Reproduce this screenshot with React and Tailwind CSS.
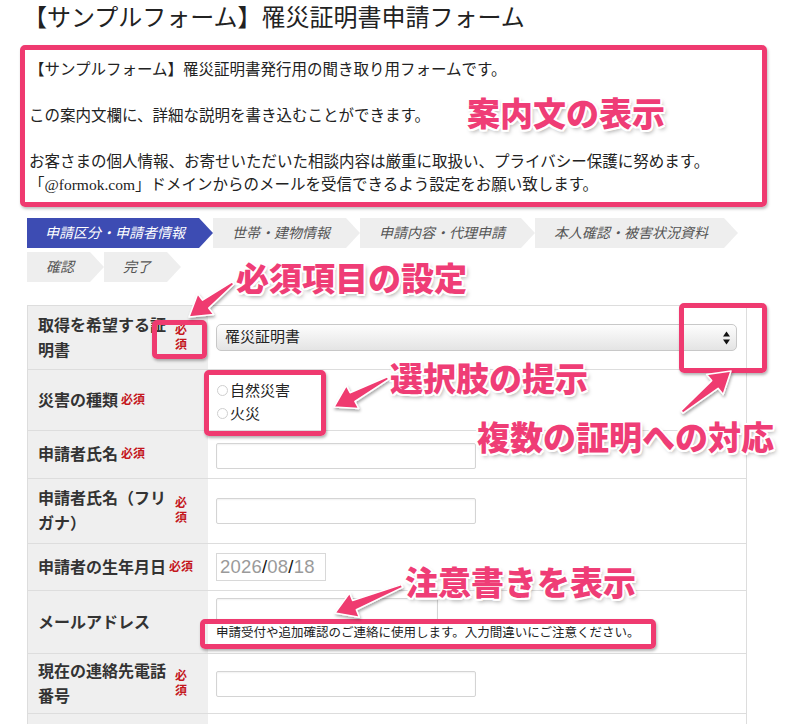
import React from 'react';

const SERIF = "[font-family:'Liberation_Serif','Noto_Sans_CJK_JP',serif]";
const SANS = "[font-family:'Liberation_Sans','Noto_Sans_CJK_JP',sans-serif]";

function arrowPoints(x1, y1, x2, y2, headLen = 21, headW = 26, tailW = 3, shaftW = 10) {
  const dx = x2 - x1, dy = y2 - y1;
  const L = Math.hypot(dx, dy);
  const ux = dx / L, uy = dy / L;
  const px = -uy, py = ux;
  const bx = x2 - ux * headLen, by = y2 - uy * headLen;
  const pts = [
    [x1 + (px * tailW) / 2, y1 + (py * tailW) / 2],
    [bx + (px * shaftW) / 2, by + (py * shaftW) / 2],
    [bx + (px * headW) / 2, by + (py * headW) / 2],
    [x2, y2],
    [bx - (px * headW) / 2, by - (py * headW) / 2],
    [bx - (px * shaftW) / 2, by - (py * shaftW) / 2],
    [x1 - (px * tailW) / 2, y1 - (py * tailW) / 2],
  ];
  return pts.map((p) => p.map((v) => v.toFixed(1)).join(',')).join(' ');
}

function Step({ active, children }) {
  return (
    <div
      className={
        active
          ? 'h-[30px] flex items-center pl-[18px] pr-[28px] text-[14px] italic bg-[#3d4cb3] text-white [clip-path:polygon(0_0,calc(100%_-_14px)_0,100%_50%,calc(100%_-_14px)_100%,0_100%)]'
          : 'h-[30px] flex items-center pl-[19px] pr-[30px] text-[14px] italic bg-[#eeeeee] text-[#555] [clip-path:polygon(0_0,calc(100%_-_14px)_0,100%_50%,calc(100%_-_14px)_100%,0_100%)]'
      }
    >
      {children}
    </div>
  );
}

function Req() {
  return <span className="ml-[3px] text-[12px] font-bold text-[#c4161c]">必須</span>;
}

function ReqV() {
  return (
    <span className="ml-[9px] w-[12px] text-[12px] leading-[15px] font-bold text-[#c4161c]">必須</span>
  );
}

function TextInput({ w = 'w-[260px]' }) {
  return (
    <div className={`${w} h-[26px] bg-white border border-[#d4d4d4] rounded-[2px] shadow-[inset_0_1px_2px_rgba(0,0,0,0.06)]`} />
  );
}

function Box({ className }) {
  return (
    <div
      className={`absolute border-[5px] border-[#ef3a70] rounded-[5px] shadow-[1px_2px_3px_rgba(0,0,0,0.3)] ${className}`}
    />
  );
}

function Note({ className, children }) {
  return (
    <div
      className={`absolute whitespace-nowrap text-[33px] leading-[36px] font-black text-[#ef3d76] [font-family:'Noto_Sans_CJK_JP',sans-serif] [text-shadow:-1.5px_-1.5px_0_#fff,1.5px_-1.5px_0_#fff,-1.5px_1.5px_0_#fff,1.5px_1.5px_0_#fff,0_2px_0_#fff,2px_0_0_#fff,-2px_0_0_#fff,0_-2px_0_#fff,2px_3px_4px_rgba(0,0,0,0.35)] ${className}`}
    >
      {children}
    </div>
  );
}

export default function App() {
  const arrows = [
    [233, 283, 189, 317],
    [388, 378, 334, 407],
    [682, 412, 731, 371],
    [402, 586, 335, 613],
  ];
  return (
    <div className={`relative w-[787px] h-[724px] overflow-hidden bg-white text-[#222] ${SERIF}`}>
      <div className="pl-[27px]">
        <h1 className="text-[24px] leading-[36px] ml-[-4px] text-[#222]">【サンプルフォーム】罹災証明書申請フォーム</h1>

        <div className="mt-[9px] ml-[-7px] w-[747px] h-[162px] border-[5px] border-[#ef3a70] rounded-[5px] shadow-[1px_2px_3px_rgba(0,0,0,0.25)] px-[4px] pt-[8px] text-[15.5px] leading-[23px] text-[#222]">
          <p>【サンプルフォーム】罹災証明書発行用の聞き取り用フォームです。</p>
          <p>&nbsp;</p>
          <p>この案内文欄に、詳細な説明を書き込むことができます。</p>
          <p>&nbsp;</p>
          <p>お客さまの個人情報、お寄せいただいた相談内容は厳重に取扱い、プライバシー保護に努めます。</p>
          <p>「@formok.com」ドメインからのメールを受信できるよう設定をお願い致します。</p>
        </div>

        <div className="mt-[11px] w-[720px] flex flex-wrap gap-y-[4px]">
          <Step active>申請区分・申請者情報</Step>
          <Step>世帯・建物情報</Step>
          <Step>申請内容・代理申請</Step>
          <Step>本人確認・被害状況資料</Step>
          <Step>確認</Step>
          <Step>完了</Step>
        </div>

        <div className="mt-[23px] w-[720px] border-t border-l border-r border-[#dddddd] text-[#333]">
          {/* row 1 */}
          <div className="flex h-[64px] border-b border-[#dddddd]">
            <div className="w-[180px] shrink-0 bg-[#efefef] pl-[10px] flex items-center text-[16px] leading-[25px] font-bold">
              <div className="w-[128px]">取得を希望する証明書</div>
              <ReqV />
            </div>
            <div className="flex-1 pl-[8px] pr-[9px] flex items-center">
              <div className={`relative w-full h-[27px] rounded-[5px] border border-[#c8c8c8] bg-gradient-to-b from-[#fdfdfd] to-[#e4e4e4] flex items-center pl-[8px] text-[15px] text-[#222] ${SANS}`}>
                罹災証明書
                <svg className="absolute right-[5px] top-[6px]" width="9" height="14" viewBox="0 0 9 14">
                  <path d="M4.5 0.5 L8 5.5 L1 5.5 Z" fill="#111" />
                  <path d="M4.5 13.5 L8 8.5 L1 8.5 Z" fill="#111" />
                </svg>
              </div>
            </div>
          </div>

          {/* row 2 */}
          <div className="flex h-[61px] border-b border-[#dddddd]">
            <div className="w-[180px] shrink-0 bg-[#efefef] pl-[10px] flex items-center text-[16px] leading-[25px] font-bold">
              災害の種類<Req />
            </div>
            <div className={`flex-1 pl-[9px] flex flex-col justify-center text-[15px] leading-[23px] text-[#222] ${SANS}`}>
              <div className="flex items-center mt-[3px]">
                <span className="w-[11px] h-[11px] rounded-full border border-[#cfcfcf] bg-white mr-[2px]" />
                自然災害
              </div>
              <div className="flex items-center">
                <span className="w-[11px] h-[11px] rounded-full border border-[#cfcfcf] bg-white mr-[2px]" />
                火災
              </div>
            </div>
          </div>

          {/* row 3 */}
          <div className="flex h-[48px] border-b border-[#dddddd]">
            <div className="w-[180px] shrink-0 bg-[#efefef] pl-[10px] flex items-center text-[16px] leading-[25px] font-bold">
              申請者氏名<Req />
            </div>
            <div className="flex-1 pl-[8px] flex items-center pt-[3px]">
              <TextInput />
            </div>
          </div>

          {/* row 4 */}
          <div className="flex h-[65px] border-b border-[#dddddd]">
            <div className="w-[180px] shrink-0 bg-[#efefef] pl-[10px] flex items-center text-[16px] leading-[25px] font-bold">
              <div className="w-[128px]">申請者氏名（フリガナ）</div>
              <ReqV />
            </div>
            <div className="flex-1 pl-[8px] flex items-center">
              <TextInput />
            </div>
          </div>

          {/* row 5 */}
          <div className="flex h-[47px] border-b border-[#dddddd]">
            <div className="w-[180px] shrink-0 bg-[#efefef] pl-[10px] flex items-center text-[16px] leading-[25px] font-bold">
              申請者の生年月日<Req />
            </div>
            <div className="flex-1 pl-[8px] flex items-center">
              <div className={`w-[110px] h-[28px] border border-[#d8d8d8] flex items-center pl-[3px] text-[18.5px] text-[#9a9a9a] tracking-[0.2px] ${SANS}`}>
                2026<span className="text-[#111]">/</span>08<span className="text-[#111]">/</span>18
              </div>
            </div>
          </div>

          {/* row 6 */}
          <div className="flex h-[63px] border-b border-[#dddddd]">
            <div className="w-[180px] shrink-0 bg-[#efefef] pl-[10px] flex items-center text-[16px] leading-[25px] font-bold">
              メールアドレス
            </div>
            <div className="flex-1 pl-[8px] flex flex-col justify-start pt-[7px]">
              <TextInput w="w-[222px]" />
              <div className="mt-[1px] text-[12.5px] leading-[16px] text-[#222] whitespace-nowrap">
                申請受付や追加確認のご連絡に使用します。入力間違いにご注意ください。
              </div>
            </div>
          </div>

          {/* row 7 */}
          <div className="flex h-[60px] border-b border-[#dddddd]">
            <div className="w-[180px] shrink-0 bg-[#efefef] pl-[10px] flex items-center text-[16px] leading-[25px] font-bold">
              <div className="w-[128px]">現在の連絡先電話番号</div>
              <ReqV />
            </div>
            <div className="flex-1 pl-[8px] flex items-center">
              <TextInput />
            </div>
          </div>

          {/* row 8 (continues below the fold) */}
          <div className="flex h-[60px] border-b border-[#dddddd]">
            <div className="w-[180px] shrink-0 bg-[#efefef]" />
            <div className="flex-1" />
          </div>
        </div>
      </div>

      {/* annotation boxes */}
      <Box className="left-[152px] top-[320px] w-[55px] h-[39px]" />
      <Box className="left-[679px] top-[303px] w-[88px] h-[70px]" />
      <Box className="left-[204px] top-[370px] w-[122px] h-[66px]" />
      <Box className="left-[200px] top-[619px] w-[456px] h-[30px]" />

      {/* arrows */}
      <svg className="absolute left-0 top-0 pointer-events-none" width="787" height="724" viewBox="0 0 787 724">
        <defs>
          <filter id="ash" x="-20%" y="-20%" width="140%" height="140%">
            <feDropShadow dx="1" dy="2" stdDeviation="1.5" floodColor="#000" floodOpacity="0.35" />
          </filter>
        </defs>
        {arrows.map((a, i) => (
          <polygon
            key={i}
            points={arrowPoints(a[0], a[1], a[2], a[3])}
            fill="#ef3a70"
            stroke="#ffffff"
            strokeWidth="1.5"
            strokeLinejoin="round"
            filter="url(#ash)"
          />
        ))}
      </svg>

      {/* annotation texts */}
      <Note className="left-[467px] top-[94px]">案内文の表示</Note>
      <Note className="left-[236px] top-[259px]">必須項目の設定</Note>
      <Note className="left-[390px] top-[359px]">選択肢の提示</Note>
      <Note className="left-[477px] top-[418px]">複数の証明への対応</Note>
      <Note className="left-[405px] top-[563px]">注意書きを表示</Note>
    </div>
  );
}
